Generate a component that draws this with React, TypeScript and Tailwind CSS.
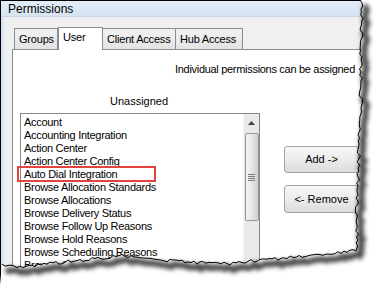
import React from 'react';

const items = [
    'Account',
    'Accounting Integration',
    'Action Center',
    'Action Center Config',
    'Auto Dial Integration',
    'Browse Allocation Standards',
    'Browse Allocations',
    'Browse Delivery Status',
    'Browse Follow Up Reasons',
    'Browse Hold Reasons',
    'Browse Scheduling Reasons',
    'Browse Shippers',
    'Browse Ship Methods',
];

// simple seeded random so the torn edge is the same every render
const rng = (seed: number) => () => {
    seed = (seed * 16807) % 2147483647;
    return seed / 2147483647;
};

const lerp = (pts: number[][], t: number) => {
    for (let i = 0; i < pts.length - 1; i++) {
        const [a, av] = pts[i];
        const [b, bv] = pts[i + 1];
        if ((t >= a && t <= b) || (t <= a && t >= b)) {
            return av + ((t - a) / (b - a)) * (bv - av);
        }
    }
    return pts[pts.length - 1][1];
};

const buildEdge = () => {
    const r = rng(42);
    const right = [[0, 362], [60, 361], [100, 361], [150, 359], [200, 357], [248, 357]];
    const bottom = [[358, 249], [340, 252], [300, 257], [260, 260], [230, 264], [190, 262], [150, 259], [120, 256], [70, 261], [25, 267], [0, 264]];
    const pts: string[] = [];
    for (let y = 0; y <= 248; y += 3) {
        pts.push(`${(lerp(right, y) + (r() - 0.5) * 3.5).toFixed(1)},${y}`);
    }
    for (let x = 356; x >= 0; x -= 3) {
        pts.push(`${x},${(lerp(bottom, x) + (r() - 0.5) * 3.5).toFixed(1)}`);
    }
    return pts;
};

const TornEdge = () => {
    const pts = buildEdge();
    const line = 'M' + pts.join(' L');
    const outside = `M380,0 L${pts.join(' L')} L0,285 L380,285 Z`;
    return (
        <svg className="absolute inset-0 pointer-events-none" width="380" height="285" viewBox="0 0 380 285">
            <defs>
                <filter id="blur" x="-10%" y="-10%" width="120%" height="120%">
                    <feGaussianBlur stdDeviation="2" />
                </filter>
            </defs>
            <path d={outside} fill="#ffffff" />
            <path d={line} fill="none" stroke="#333333" strokeWidth="6" filter="url(#blur)" transform="translate(4,5)" opacity="0.9" />
            <path d={line} fill="none" stroke="#000000" strokeWidth="1" />
        </svg>
    );
};

const Tab = ({ label, width, selected }: { label: string; width: string; selected?: boolean }) => (
    <div
        className={`${width} border border-b-0 border-[#898c95] text-[11px] tracking-[-0.2px] px-[4px] whitespace-nowrap ${
            selected
                ? 'h-[23px] bg-white leading-[19px] relative z-10 -mb-px'
                : 'h-[21px] bg-gradient-to-b from-[#f2f2f2] to-[#e3e3e3] leading-[21px] -ml-px first:ml-0'
        }`}
    >
        {label}
    </div>
);

const WinButton = ({ label, height }: { label: string; height: string }) => (
    <div className={`w-[75px] ${height} rounded-[3px] border border-[#a3a3a3] bg-gradient-to-b from-[#f7f7f7] via-[#ececec] to-[#dcdcdc] text-[11px] flex items-center justify-center`}>
        {label}
    </div>
);

const App = () => {
    return (
        <div className="w-[380px] h-[285px] relative overflow-hidden bg-white font-['Liberation_Sans',Arial,sans-serif] text-black">
            <div className="w-[400px] h-[300px] border-l border-t border-black flex flex-col bg-[#f0f0f0]">
                <div className="h-[16px] bg-gradient-to-b from-[#e4edf8] to-[#d6e3f2] pl-[7px] text-[12px] leading-[16px] border-b border-[#c9d6e6]">
                    Permissions
                </div>
                <div className="flex-1 border-l-[3px] border-[#dbe5f1] pt-[10px] pl-[8px]">
                    <div className="flex items-end pl-[2px] h-[22px]">
                        <Tab label="Groups" width="w-[44px]" />
                        <Tab label="User" width="w-[45px]" selected />
                        <Tab label="Client Access" width="w-[74px]" />
                        <Tab label="Hub Access" width="w-[68px]" />
                    </div>
                    <div className="bg-white border-t border-l border-[#898c95] h-[260px]">
                        <div className="pl-[162px] pt-[13px] text-[11px] leading-[13px] tracking-[-0.3px] whitespace-nowrap">
                            Individual permissions can be assigned
                        </div>
                        <div className="flex mt-[19px]">
                            <div className="ml-[7px] w-[240px] flex flex-col">
                                <div className="text-center text-[11px] leading-[13px] pr-[2px]">Unassigned</div>
                                <div className="mt-[5px] h-[160px] border-t border-l border-r border-[#828790] flex">
                                    <div className="flex-1 pl-[3px] pt-[2px] text-[11px] leading-[13px] tracking-[-0.3px]">
                                        {items.map((item) => (
                                            <div key={item} className="whitespace-nowrap">{item}</div>
                                        ))}
                                    </div>
                                    <div className="w-[16px] bg-[#e9e9e9] border-l border-[#f4f4f4] flex flex-col">
                                        <div className="h-[18px] flex items-center justify-center">
                                            <svg width="7" height="4" viewBox="0 0 7 4">
                                                <path d="M0,4 L3.5,0 L7,4 Z" fill="#404040" />
                                            </svg>
                                        </div>
                                        <div className="mt-[1px] mx-[0.5px] h-[88px] rounded-[2px] border border-[#979797] bg-gradient-to-r from-[#f3f3f3] via-[#e6e6e6] to-[#cfcfcf] flex flex-col items-center justify-center gap-[1px]">
                                            <div className="w-[7px] h-px bg-[#7a7a7a]" />
                                            <div className="w-[7px] h-px bg-[#7a7a7a]" />
                                            <div className="w-[7px] h-px bg-[#7a7a7a]" />
                                            <div className="w-[7px] h-px bg-[#7a7a7a]" />
                                        </div>
                                    </div>
                                </div>
                            </div>
                            <div className="ml-[24px] pt-[51px] flex flex-col gap-[12px]">
                                <WinButton label="Add ->" height="h-[27px]" />
                                <WinButton label="<- Remove" height="h-[28px]" />
                            </div>
                        </div>
                    </div>
                </div>
            </div>
            <div className="absolute left-[17px] top-[166px] w-[139px] h-[16px] border-2 border-[#e5433f]" />
            <TornEdge />
        </div>
    );
};

export default App;
